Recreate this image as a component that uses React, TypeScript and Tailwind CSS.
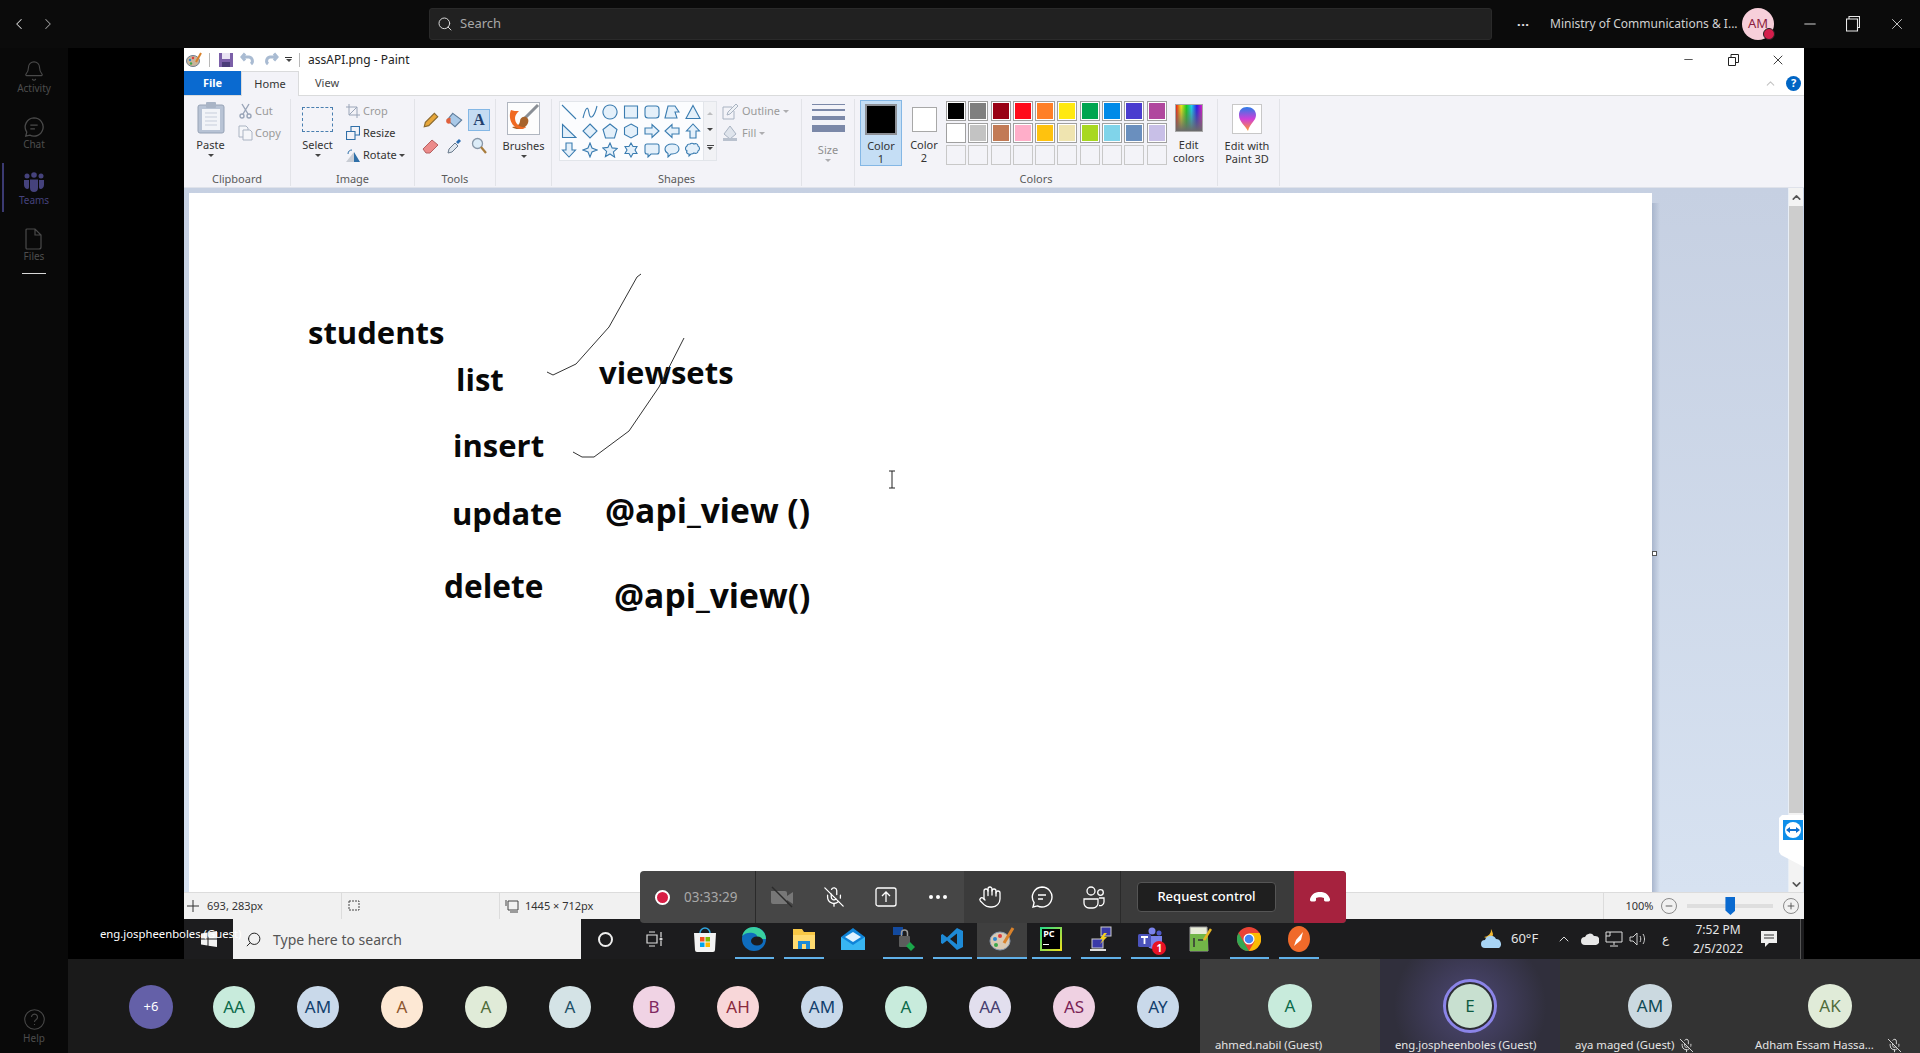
import { Bell, ChevronDown, ChevronLeft, ChevronRight, ChevronUp, Hand, MicOff, Minus, Plus, Search, X } from "lucide-react";

const shapes = [
  "M1 1L15 15",
  "M1 14C4 2 6 2 7 9S12 14 15 2",
  "M8 1a7 7 0 1 0 .01 0z",
  "M1.5 2h13v12h-13z",
  "M4 2h8a3 3 0 0 1 3 3v6a3 3 0 0 1-3 3H4a3 3 0 0 1-3-3V5a3 3 0 0 1 3-3z",
  "M1 14L4 2h7l4 6h-4l2 6z",
  "M8 1.5L15 14.5H1z",
  "M1.5 1.5L15 14.5H1.5z",
  "M8 1L15 8L8 15L1 8z",
  "M8 1L15 6.5L12.5 15H3.5L1 6.5z",
  "M8 1L14.5 4.5v7L8 15L1.5 11.5v-7z",
  "M1 5h7V1.5L15 8l-7 6.5V11H1z",
  "M15 5H8V1.5L1 8l7 6.5V11h7z",
  "M5 15V8H1.5L8 1l6.5 7H11v7z",
  "M5 1v7H1.5L8 15l6.5-7H11V1z",
  "M8 1L10 6L15 8L10 10L8 15L6 10L1 8L6 6z",
  "M8 1l2.1 4.9 5.3.5-4 3.5 1.2 5.2L8 12l-4.6 2.6 1.2-5.2-4-3.5 5.3-.5z",
  "M8 1l2 3.5h4L12 8l2 3.5h-4L8 15l-2-3.5H2L4 8 2 4.5h4z",
  "M3 2h10a2 2 0 0 1 2 2v6a2 2 0 0 1-2 2H7l-3 3v-3H3a2 2 0 0 1-2-2V4a2 2 0 0 1 2-2z",
  "M8 2c4 0 7 2 7 5s-3 5-7 5H7l-3 3v-3.5C2 10.5 1 9 1 7c0-3 3-5 7-5z",
  "M5 2c1-1 3-1 4 0 2-1 4 0 4 2 2 1 2 4 0 5 0 2-2 3-4 2-1 1-2 1-3 1l-2 2v-2c-2 0-3-2-2-3-2-1-2-4 0-5 0-1 1-2 3-2z",
];

const paletteTop = ["#000000", "#7f7f7f", "#990014", "#ff0a1a", "#ff7f27", "#ffe910", "#00a550", "#008ae8", "#4a3ccf", "#b0479e"];
const paletteMid = ["#ffffff", "#c3c3c3", "#c27a55", "#ffaec9", "#ffc20e", "#efe4b0", "#a8d820", "#80d4ea", "#6a8fbe", "#c8bfe7"];

const people = [
  { label: "AA", bg: "bg-[#c8ebdc]", fg: "text-[#0b6a4a]" },
  { label: "AM", bg: "bg-[#c9d9ea]", fg: "text-[#123f6d]" },
  { label: "A", bg: "bg-[#fde8d4]", fg: "text-[#8e562e]" },
  { label: "A", bg: "bg-[#e0ebd8]", fg: "text-[#4f6b3a]" },
  { label: "A", bg: "bg-[#d4e3e6]", fg: "text-[#1e4f66]" },
  { label: "B", bg: "bg-[#f0d3e4]", fg: "text-[#80275f]" },
  { label: "AH", bg: "bg-[#f8d7d9]", fg: "text-[#8a2a3c]" },
  { label: "AM", bg: "bg-[#c9d9ea]", fg: "text-[#123f6d]" },
  { label: "A", bg: "bg-[#c8ebdc]", fg: "text-[#0b6a4a]" },
  { label: "AA", bg: "bg-[#e2dfee]", fg: "text-[#463e70]" },
  { label: "AS", bg: "bg-[#efd1e2]", fg: "text-[#7a1f55]" },
  { label: "AY", bg: "bg-[#c9d9ea]", fg: "text-[#123f6d]" },
];

function Caret({ className = "" }: { className?: string }) {
  return <span className={`block w-0 h-0 border-x-[3px] border-x-transparent border-t-[3px] border-t-[#444] ${className}`} />;
}

function RailItem({ label, active, icon }: { label: string; active?: boolean; icon: React.ReactNode }) {
  return (
    <div className="relative h-[56px] w-full flex flex-col items-center justify-center">
      {active && <div className="absolute left-[2px] top-[2px] bottom-[5px] w-[2px] bg-[#3b3a72]" />}
      {icon}
      <span className={`text-[10px] leading-[13px] ${active ? "text-[#45427c]" : "text-[#4d4d4d]"}`}>{label}</span>
    </div>
  );
}

function ChatIcon({ color, size = 22 }: { color: string; size?: number }) {
  return (
    <svg width={size} height={size} viewBox="0 0 24 24" fill="none" stroke={color} strokeWidth="1.4">
      <path d="M12 2a10 10 0 1 1-4.6 18.9L3 22l1.1-4.4A10 10 0 0 1 12 2z" />
      <path d="M8 10h8M8 14h5" />
    </svg>
  );
}

function RibbonGroup({ label, width, children }: { label: string; width: string; children: React.ReactNode }) {
  return (
    <div className={`${width} h-full border-r border-[#e2e3e8] flex flex-col shrink-0`}>
      <div className="flex-1 flex min-h-0">{children}</div>
      <div className="h-[15px] text-center text-[11px] leading-[15px] text-[#5a5a5a]">{label}</div>
    </div>
  );
}

function Label({ children, dim }: { children: React.ReactNode; dim?: boolean }) {
  return <span className={`block text-center text-[11px] leading-[13px] ${dim ? "text-[#8f8f8f]" : "text-[#333]"}`}>{children}</span>;
}

function SmallRow({ icon, text, dim }: { icon: React.ReactNode; text: string; dim?: boolean }) {
  return (
    <div className="h-[22px] flex items-center gap-[1px]">
      <span className="w-[18px] flex justify-center">{icon}</span>
      <span className={`text-[11px] ${dim ? "text-[#9a9a9a]" : "text-[#333]"}`}>{text}</span>
    </div>
  );
}

function Canvas() {
  return (
    <div className="relative w-[1463px] h-full bg-white shrink-0 overflow-hidden font-['Open_Sans',sans-serif] font-bold text-[#080808] text-[31px] leading-[40px]">
      <span className="absolute left-[119px] top-[119px]">students</span>
      <span className="absolute left-[267px] top-[166px]">list</span>
      <span className="absolute left-[410px] top-[159px]">viewsets</span>
      <span className="absolute left-[264px] top-[232px]">insert</span>
      <span className="absolute left-[263px] top-[300px]">update</span>
      <span className="absolute left-[416px] top-[297px] text-[33.6px]">@api_view ()</span>
      <span className="absolute left-[255px] top-[373px] text-[31.6px]">delete</span>
      <span className="absolute left-[425px] top-[382px] text-[33.6px]">@api_view()</span>
      <svg className="absolute left-0 top-0" width="1463" height="700" fill="none" stroke="#333" strokeWidth="1">
        <path d="M452 81L448 84L420 134L387 171L364 182L358 179" />
        <path d="M495 145L470 194L440 238L405 264L393 264L384 259" />
        <path d="M700 278h6M700 295h6M703 278v17" stroke="#222" />
      </svg>
    </div>
  );
}

function ToolbarCell({ children }: { children: React.ReactNode }) {
  return <div className="w-[52px] h-full flex items-center justify-center shrink-0">{children}</div>;
}

function TaskSlot({ on, active, children }: { on?: boolean; active?: boolean; children: React.ReactNode }) {
  return (
    <div className={`relative w-[49.5px] h-full flex items-center justify-center shrink-0 ${active ? "bg-[#3f3f3f]" : ""}`}>
      {children}
      {on && <div className={`absolute bottom-0 h-[2px] bg-[#60b0e8] ${active ? "inset-x-0" : "inset-x-[5px]"}`} />}
    </div>
  );
}

function Tile({ name, mic, wide, bg, avatar }: { name: string; mic?: boolean; wide?: string; bg: string; avatar: React.ReactNode }) {
  return (
    <div className={`w-[180px] h-full flex flex-col items-center shrink-0 ${bg}`}>
      <div className="h-[50px] mt-[22px] flex items-center">{avatar}</div>
      <div className={`self-start pl-[15px] mt-[6px] flex items-center text-[11.3px] leading-[16px] text-[#e4e4e4] ${wide ?? "gap-[5px]"}`}>
        <span className="whitespace-nowrap">{name}</span>
        {mic && <MicOff size={15} strokeWidth={1.5} className="text-[#ddd]" />}
      </div>
    </div>
  );
}

export default function App() {
  return (
    <div className="relative w-[1920px] h-[1053px] flex flex-col overflow-hidden bg-black font-['Noto_Sans',sans-serif]">
      {/* top bar */}
      <div className="h-[48px] shrink-0 bg-[#0b0b0b] flex items-center">
        <div className="w-[429px] pl-[10px] flex items-center gap-[11px] text-[#d6d6d6]">
          <ChevronLeft size={18} strokeWidth={1.4} />
          <ChevronRight size={18} strokeWidth={1.4} className="text-[#9a9a9a]" />
        </div>
        <div className="w-[1063px] h-[32px] bg-[#212121] rounded-[3px] border border-[#2a2a2a] flex items-center pl-[7px] gap-[7px] text-[#a8a8a8]">
          <Search size={16} strokeWidth={1.5} className="text-[#d8d8d8]" />
          <span className="text-[13px]">Search</span>
        </div>
        <div className="flex-1 flex items-center">
          <span className="ml-[25px] w-[14px] text-[#e5e5e5] text-[13px] font-bold leading-none tracking-[0.5px]">···</span>
          <span className="ml-[19px] w-[178px] text-[12px] text-[#d0d0d0] whitespace-nowrap">Ministry of Communications &amp; I...</span>
          <div className="relative ml-[14px] w-[32px] h-[32px] rounded-full bg-[#f7cfda] text-[#8c1d40] text-[13px] flex items-center justify-center">
            AM
            <span className="absolute right-[-1px] bottom-0 w-[12px] h-[12px] rounded-full bg-[#d41e4b] border border-[#222]" />
          </div>
          <Minus size={18} strokeWidth={1.2} className="ml-[27px] text-[#e8e8e8]" />
          <svg className="ml-[27px]" width="14" height="16" viewBox="0 0 14 16" fill="none" stroke="#e8e8e8" strokeWidth="1.1">
            <path d="M.5 3h11v12H.5zM3 3V.5h10.500v11H11.500" />
          </svg>
          <X size={18} strokeWidth={1.1} className="ml-[28px] text-[#e8e8e8]" />
        </div>
      </div>

      <div className="flex-1 flex min-h-0">
        {/* left rail */}
        <div className="w-[68px] shrink-0 bg-[#090909] flex flex-col items-center pt-[1px]">
          <RailItem label="Activity" icon={<Bell size={22} strokeWidth={1.2} className="text-[#4a4a4a]" />} />
          <RailItem label="Chat" icon={<ChatIcon color="#4a4a4a" />} />
          <RailItem
            label="Teams"
            active
            icon={
              <svg width="22" height="22" viewBox="0 0 22 22" fill="#45427c">
                <circle cx="4" cy="4" r="2.500" />
                <circle cx="11" cy="3" r="2.800" />
                <circle cx="18" cy="4" r="2.500" />
                <path d="M1 8h5v7c0 1-.5 2-1.500 2C2.500 17 1 15 1 13zM16 8h5v5c0 2-1.500 4-3.500 4-1 0-1.500-1-1.500-2zM7 7.500h8V16c0 2.500-1.500 4-4 4s-4-1.500-4-4z" />
              </svg>
            }
          />
          <RailItem
            label="Files"
            icon={
              <svg width="20" height="22" viewBox="0 0 20 22" fill="none" stroke="#4a4a4a" strokeWidth="1.2">
                <path d="M3 1h8l6 6v12a2 2 0 0 1-2 2H3a1 1 0 0 1-1-1V2a1 1 0 0 1 1-1zM11 1v6h6" />
              </svg>
            }
          />
          <div className="w-[24px] h-px bg-[#d8d8d8]" />
          <div className="mt-auto mb-[8px] flex flex-col items-center gap-[2px]">
            <svg width="21" height="21" viewBox="0 0 21 21" fill="none" stroke="#484848" strokeWidth="1.1">
              <circle cx="10.500" cy="10.500" r="9.800" />
              <path d="M7.500 8a3 3 0 1 1 4.500 2.700c-1 .6-1.500 1.200-1.500 2.300M10.500 15v1" />
            </svg>
            <span className="text-[10px] leading-[13px] text-[#4d4d4d]">Help</span>
          </div>
        </div>

        <div className="flex-1 min-w-0 flex flex-col">
          {/* stage */}
          <div className="h-[911px] shrink-0 pl-[116px]">
            <div className="w-[1620px] h-full flex flex-col bg-white">
              {/* title row */}
              <div className="h-[23px] shrink-0 flex items-center text-[#222]">
                <svg className="ml-[2px]" width="16" height="16" viewBox="0 0 16 16">
                  <ellipse cx="7" cy="9" rx="6.500" ry="5.500" fill="#c9b49a" stroke="#6f7f93" />
                  <circle cx="4" cy="8" r="1.200" fill="#2f87d0" />
                  <circle cx="7" cy="6" r="1.200" fill="#e03d3d" />
                  <circle cx="5" cy="11.500" r="1.200" fill="#3ca84a" />
                  <path d="M10 10L15 1" stroke="#d9822b" strokeWidth="2" />
                </svg>
                <div className="ml-[7px] w-px h-[14px] bg-[#b8b8b8]" />
                <svg className="ml-[8px]" width="16" height="16" viewBox="0 0 16 16">
                  <path d="M1 1h14v14H1z" fill="#7b5fa8" />
                  <path d="M4 1h8v6H4z" fill="#e9e4f3" />
                  <path d="M4 10h8v5H4z" fill="#4a3c78" />
                </svg>
                <svg className="ml-[6px]" width="16" height="16" viewBox="0 0 16 16" fill="none" stroke="#a9bbd2" strokeWidth="3">
                  <path d="M3 5h6a4 4 0 0 1 2 7M5 1.500L2 5l3 3.500" />
                </svg>
                <svg className="ml-[7px]" width="16" height="16" viewBox="0 0 16 16" fill="none" stroke="#a9bbd2" strokeWidth="3">
                  <path d="M13 5H7a4 4 0 0 0-2 7M11 1.500L14 5l-3 3.500" />
                </svg>
                <div className="ml-[6px] flex flex-col items-center gap-[1px]">
                  <div className="w-[7px] h-px bg-[#333]" />
                  <Caret />
                </div>
                <div className="ml-[7px] w-px h-[14px] bg-[#b8b8b8]" />
                <span className="ml-[8px] text-[12px] leading-[16px]">assAPI.png - Paint</span>
                <Minus size={13} strokeWidth={1.4} className="ml-auto text-[#222]" />
                <svg className="ml-[33px]" width="11" height="12" viewBox="0 0 11 12" fill="none" stroke="#222">
                  <path d="M.5 3.500h7v8h-7zM3 3.500V.5h7.500v8H8" />
                </svg>
                <X size={16} strokeWidth={1.3} className="ml-[31px] mr-[18px] text-[#222]" />
              </div>

              {/* tabs */}
              <div className="h-[25px] shrink-0 flex items-stretch border-b border-[#dadbdc] text-[11px]">
                <div className="w-[57px] bg-[#0a6ad0] text-white font-bold flex items-center justify-center">File</div>
                <div className="w-[58px] h-[25px] bg-[#f3f3f8] border-x border-t border-[#dadbdc] text-[#333] flex items-center justify-center">Home</div>
                <div className="w-[56px] text-[#444] flex items-center justify-center">View</div>
                <ChevronUp size={13} strokeWidth={2} className="ml-auto self-center text-[#c4c4c4]" />
                <div className="ml-[9px] mr-[3px] self-center w-[15px] h-[15px] rounded-full bg-[#0065c4] text-white text-[11px] font-bold flex items-center justify-center">?</div>
              </div>

              {/* ribbon */}
              <div className="h-[92px] shrink-0 bg-[#f3f3f8] flex pt-[3px] pb-px border-b border-[#dfe2ea]">
                <RibbonGroup label="Clipboard" width="w-[107px]">
                  <div className="w-[52px] pl-[1px] flex flex-col items-center">
                    <svg className="mt-[3px]" width="28" height="32" viewBox="0 0 28 32">
                      <rect x="1" y="3" width="26" height="28" rx="2" fill="#b8c3d5" stroke="#97a3b6" />
                      <rect x="5" y="7" width="18" height="21" fill="#f2f4f8" />
                      <path d="M8 11h12M8 15h12M8 19h12M8 23h12" stroke="#c7cedb" />
                      <rect x="9" y="0" width="10" height="6" rx="1" fill="#a9b4c6" />
                    </svg>
                    <div className="mt-[4px]"><Label>Paste</Label></div>
                    <Caret className="mt-[3px]" />
                  </div>
                  <div className="pt-[1px]">
                    <SmallRow dim text="Cut" icon={<svg width="13" height="16" viewBox="0 0 13 16" fill="none" stroke="#9aa5b8" strokeWidth="1.4"><path d="M3 1l6 10M10 1L4 11" /><circle cx="3" cy="13" r="2" /><circle cx="10" cy="13" r="2" /></svg>} />
                    <SmallRow dim text="Copy" icon={<svg width="15" height="16" viewBox="0 0 15 16" fill="#f5f6f9" stroke="#aab3c2"><path d="M1 1h7l2 2v9H1z" /><path d="M5 5h7l2 2v8H5z" /></svg>} />
                  </div>
                </RibbonGroup>
                <RibbonGroup label="Image" width="w-[124px]">
                  <div className="w-[53px] flex flex-col items-center">
                    <div className="mt-[8px] w-[31px] h-[25px] border border-dashed border-[#4a7fb0]" />
                    <div className="mt-[6px]"><Label>Select</Label></div>
                    <Caret className="mt-[3px]" />
                  </div>
                  <div className="pt-[1px]">
                    <SmallRow dim text="Crop" icon={<svg width="14" height="14" viewBox="0 0 14 14" fill="none" stroke="#9aa5b8"><path d="M3 0v11h11M0 3h11v11M11 3L3 11" /></svg>} />
                    <SmallRow text="Resize" icon={<svg width="14" height="14" viewBox="0 0 14 14" fill="none" stroke="#2f6fa8" strokeWidth="1.1"><path d="M5 5V.5h8.500v8.500H9M.5 5.500H9v8H.5z" /></svg>} />
                    <SmallRow text="Rotate" icon={<svg width="15" height="14" viewBox="0 0 15 14"><path d="M0 14L8 4v10z" fill="#c8ccd4" /><path d="M8 4l6 10H8z" fill="#2f6fa8" /><path d="M2 6c0-3 2-4 4-4" fill="none" stroke="#2f6fa8" /></svg>} />
                  </div>
                  <Caret className="mt-[55px] ml-[2px]" />
                </RibbonGroup>
                <RibbonGroup label="Tools" width="w-[81px]">
                  <div className="pl-[4px] pt-[9px] grid grid-cols-[24px_24px_24px] grid-rows-[24px_27px] place-items-center">
                    <svg width="18" height="18" viewBox="0 0 16 16"><path d="M2 14l1-4 8-8 3 3-8 8z" fill="#e8a73a" stroke="#8a6a30" /></svg>
                    <svg width="20" height="20" viewBox="0 0 18 18"><path d="M7 3l8 6-6 6-7-6z" fill="#a9c9e8" stroke="#5f7c9a" /><path d="M1 10c0-2 2-3 4-3v5c-2 1-4 0-4-2z" fill="#e0603c" /></svg>
                    <div className="w-[22px] h-[22px] bg-[#c5dcf2] border border-[#84b7e5] flex items-center justify-center font-['Liberation_Serif',serif] font-bold text-[16px] text-[#21406e]">A</div>
                    <svg width="18" height="16" viewBox="0 0 18 16"><path d="M1 11L10 2l6 5-8 8H4z" fill="#ec8b8b" stroke="#b56060" /></svg>
                    <svg width="16" height="17" viewBox="0 0 16 17"><path d="M1 16l1-4 6-6 3 3-6 6z" fill="#dfe6ee" stroke="#6a7a8c" /><path d="M9 5l3-3 2 2-3 3z" fill="#2b6cb0" /></svg>
                    <svg width="16" height="17" viewBox="0 0 16 17" fill="none"><circle cx="6.500" cy="6.500" r="5" fill="#dcecf8" stroke="#8897a8" strokeWidth="1.300" /><path d="M10 10l5 6" stroke="#a87c3c" strokeWidth="2.200" /></svg>
                  </div>
                </RibbonGroup>
                <RibbonGroup label="" width="w-[56px]">
                  <div className="w-full flex flex-col items-center">
                    <svg className="mt-[3px]" width="33" height="33" viewBox="0 0 33 33">
                      <rect x=".5" y=".5" width="32" height="32" fill="#fdfdfd" stroke="#b0b6c0" />
                      <path d="M31 3L17 17" stroke="#8a8f96" strokeWidth="3" />
                      <path d="M19 15c-3-1-6 1-6 4s-3 6-8 6c5 4 14 2 16-4 1-3 0-5-2-6z" fill="#a8642c" />
                      <path d="M4 8c-3 7 0 18 10 19 4 0 5-2 5-2-6 1-11-3-11-9 0-3 2-5 4-7-3 0-6 0-8-1z" fill="#f06a22" />
                    </svg>
                    <div className="mt-[4px]"><Label>Brushes</Label></div>
                    <Caret className="mt-[3px]" />
                  </div>
                </RibbonGroup>
                <RibbonGroup label="Shapes" width="w-[250px]">
                  <div className="ml-[7px] mt-[2px] w-[158px] h-[60px] flex border border-[#e2e5ea] bg-[#fbfcfe] shrink-0">
                    <div className="w-[144px] -ml-[1px] grid grid-cols-7 grid-rows-3 place-items-center">
                      {shapes.map((d, i) => (
                        <svg key={i} width="16" height="16" viewBox="0 0 16 16" fill="#e4f0fa" stroke="#3a7cb0" strokeWidth="1.100">
                          <path d={d} fill={i < 2 ? "none" : "#e4f0fa"} />
                        </svg>
                      ))}
                    </div>
                    <div className="flex-1 bg-[#f1f2f5] border-l border-[#e2e5ea] flex flex-col items-center justify-around py-[3px]">
                      <Caret className="rotate-180 opacity-30" />
                      <Caret />
                      <div className="flex flex-col items-center gap-[1px]">
                        <div className="w-[7px] h-px bg-[#444]" />
                        <Caret />
                      </div>
                    </div>
                  </div>
                  <div className="ml-[5px] mt-[1px]">
                    <div className="h-[22px] flex items-center gap-[3px] text-[11px] text-[#9a9a9a]">
                      <svg width="17" height="17" viewBox="0 0 17 17" fill="none" stroke="#a9b3c2"><path d="M1 4h9M1 4v12h11V8" /><path d="M5 12l1-3 8-8 2 2-8 8z" fill="#eef1f5" /></svg>
                      Outline
                      <Caret className="opacity-40" />
                    </div>
                    <div className="h-[22px] flex items-center gap-[3px] text-[11px] text-[#9a9a9a]">
                      <svg width="17" height="17" viewBox="0 0 17 17"><path d="M8 1l6 8-6 5-6-5z" fill="#dfe4ec" stroke="#a9b3c2" /><path d="M1 13h14v3H1z" fill="#b9c1ce" /></svg>
                      Fill
                      <Caret className="opacity-40" />
                    </div>
                  </div>
                </RibbonGroup>
                <RibbonGroup label="" width="w-[53px]">
                  <div className="w-full flex flex-col items-center">
                    <div className="mt-[5px] w-[33px] flex flex-col">
                      <div className="h-px bg-[#7b88a8]" />
                      <div className="mt-[4px] h-[2px] bg-[#7b88a8]" />
                      <div className="mt-[5px] h-[4px] bg-[#7b88a8]" />
                      <div className="mt-[5px] h-[7px] bg-[#7b88a8]" />
                    </div>
                    <div className="mt-[11px]"><Label dim>Size</Label></div>
                    <Caret className="mt-[3px] opacity-40" />
                  </div>
                </RibbonGroup>
                <RibbonGroup label="Colors" width="w-[363px]">
                  <div className="ml-[5px] mt-[1px] w-[42px] h-[66px] bg-[#c5def5] border border-[#84b7e5] flex flex-col items-center shrink-0">
                    <div className="mt-[3px] w-[32px] h-[31px] bg-black border-2 border-[#8d9096]" />
                    <div className="mt-[4px]"><Label>Color</Label></div>
                    <Label>1</Label>
                  </div>
                  <div className="w-[44px] flex flex-col items-center shrink-0">
                    <div className="mt-[8px] w-[25px] h-[25px] bg-white border border-[#a8a8a8]" />
                    <div className="mt-[6px]"><Label>Color</Label></div>
                    <Label>2</Label>
                  </div>
                  <div className="mt-[2px] grid grid-cols-[repeat(10,20px)] grid-rows-[repeat(3,20px)] gap-x-[2.300px] gap-y-[2px] shrink-0">
                    {paletteTop.concat(paletteMid).map((c, i) => (
                      <div key={i} className="border border-[#a0a0a0] p-px bg-white">
                        <div className="w-full h-full" style={{ backgroundColor: c }} />
                      </div>
                    ))}
                    {Array.from({ length: 10 }).map((_, i) => (
                      <div key={i} className="border border-[#c8c8c8] bg-[#f3f3f8]" />
                    ))}
                  </div>
                  <div className="ml-[7px] w-[30px] flex flex-col items-center shrink-0">
                    <div className="mt-[5px] w-[28px] h-[28px] border border-[#a8a8a8] bg-[linear-gradient(180deg,transparent,#6b6b6b),linear-gradient(90deg,#f01818,#f0e818,#18d018,#18d0f0,#2818f0,#e018c8)]" />
                    <div className="mt-[6px]"><Label>Edit</Label></div>
                    <Label>colors</Label>
                  </div>
                </RibbonGroup>
                <RibbonGroup label="" width="w-[62px]">
                  <div className="w-full pr-[3px] flex flex-col items-center">
                    <div className="mt-[5px] w-[30px] h-[30px] bg-white border border-[#c8c8c8] flex items-center justify-center">
                      <svg width="20" height="26" viewBox="0 0 20 26">
                        <defs>
                          <linearGradient id="drop" x1="0" y1="0" x2="0" y2="1">
                            <stop offset="0" stopColor="#2a7de8" />
                            <stop offset=".5" stopColor="#d03fd8" />
                            <stop offset="1" stopColor="#ff9a2a" />
                          </linearGradient>
                        </defs>
                        <path d="M10 1c5 0 9 3 9 8 0 6-6 8-8 16-3-6-9-9-9-16 0-5 3-8 8-8z" fill="url(#drop)" />
                      </svg>
                    </div>
                    <div className="mt-[5px]"><Label>Edit with</Label></div>
                    <Label>Paint 3D</Label>
                  </div>
                </RibbonGroup>
              </div>

              {/* drawing area */}
              <div className="relative h-[704px] shrink-0 flex bg-[linear-gradient(180deg,#c6d0e2,#d7e2f1)]">
                <div className="flex-1 min-w-0 pl-[5px] pt-[5px] flex">
                  <Canvas />
                  <div className="w-[8px] mt-[10px] bg-[linear-gradient(90deg,#a9b6cd,transparent)]" />
                </div>
                <div className="absolute left-[1468px] top-[363px] w-[5px] h-[5px] bg-white border border-[#555]" />
                <div className="w-[15px] mr-px shrink-0 flex flex-col border-l border-[#e8eef5] bg-[#f3f3f3]">
                  <div className="h-[18px] flex items-center justify-center"><ChevronUp size={13} strokeWidth={3} className="text-[#555]" /></div>
                  <div className="h-[607px] bg-[#cdcdcd]" />
                  <div className="mt-auto h-[16px] flex items-center justify-center"><ChevronDown size={13} strokeWidth={3} className="text-[#555]" /></div>
                </div>
                <div className="absolute right-0 top-[627px] w-[25px] h-[52px]">
                  <svg className="absolute inset-0" width="25" height="52" viewBox="0 0 25 52">
                    <path d="M3 0h22v52L2 40 0 37V3z" fill="#fff" />
                  </svg>
                  <div className="absolute left-[4px] top-[5px] w-[20px] h-[20px] bg-[#0e8ee9] flex items-center justify-center">
                    <svg width="18" height="18" viewBox="0 0 18 18">
                      <circle cx="9" cy="9" r="8" fill="#fff" />
                      <path d="M2 9l4-3v2h6V6l4 3-4 3v-2H6v2z" fill="#0e6fd0" />
                    </svg>
                  </div>
                </div>
              </div>

              {/* status bar */}
              <div className="h-[27px] shrink-0 bg-[#f1f1f1] border-t border-[#dcdcdc] flex items-center text-[11px] text-[#333]">
                <div className="w-[158px] h-full pl-[3px] flex items-center gap-[8px] border-r border-[#dcdcdc]">
                  <svg width="12" height="12" viewBox="0 0 12 12" stroke="#333" fill="none"><path d="M6 0v12M0 6h12" /></svg>
                  693, 283px
                </div>
                <div className="w-[158px] h-full pl-[4px] flex items-center border-r border-[#dcdcdc]">
                  <svg width="14" height="14" viewBox="0 0 14 14" stroke="#444" fill="none" strokeDasharray="2 1"><path d="M3 2h10v9H3z" /></svg>
                </div>
                <div className="h-full pl-[5px] flex items-center gap-[6px]">
                  <svg width="14" height="14" viewBox="0 0 14 14" stroke="#444" fill="none"><path d="M3 2h10v9H3zM1 1v6M5 13h8" /></svg>
                  1445 × 712px
                </div>
                <div className="ml-[1010px] pl-[21px] h-full flex items-center border-l border-[#dcdcdc]">
                  <span className="w-[32px]">100%</span>
                  <span className="ml-[4px] w-[16px] h-[16px] rounded-full border border-[#8a8a8a] flex items-center justify-center"><Minus size={10} strokeWidth={2} className="text-[#444]" /></span>
                  <div className="relative ml-[10px] w-[86px] h-[4px] bg-[#dedede]">
                    <div className="absolute left-[38px] top-[-7px] w-[10px] h-[18px] bg-[#0a6ad0] [clip-path:polygon(0_0,100%_0,100%_75%,50%_100%,0_75%)]" />
                  </div>
                  <span className="ml-[10px] w-[16px] h-[16px] rounded-full border border-[#8a8a8a] flex items-center justify-center"><Plus size={10} strokeWidth={2} className="text-[#444]" /></span>
                </div>
              </div>

              {/* windows taskbar */}
              <div className="h-[40px] shrink-0 bg-[#1c1c1e] flex items-center">
                <div className="w-[49px] flex justify-center">
                  <svg width="16" height="16" viewBox="0 0 16 16" fill="#f2f2f2"><path d="M0 2.500L6.500 1.500V7.500H0zM7.500 1.300L16 0V7.500H7.500zM0 8.500H6.500V14.500L0 13.500zM7.500 8.500H16V16L7.500 14.700z" /></svg>
                </div>
                <div className="w-[348px] h-full bg-[#f1f1f1] flex items-center pl-[12px] gap-[11px] text-[14px] text-[#555]">
                  <Search size={17} strokeWidth={1.4} className="text-[#222] -scale-x-100" />
                  Type here to search
                </div>
                <div className="w-[48px] flex justify-center">
                  <div className="w-[15px] h-[15px] rounded-full border-[2.500px] border-[#eeeeee]" />
                </div>
                <div className="w-[51px] flex justify-center">
                  <svg width="18" height="16" viewBox="0 0 18 16" fill="none" stroke="#ddd" strokeWidth="1.200"><path d="M1 4h10v8H1zM3 1h6M3 15h6M15 1v5M15 10v5" /><circle cx="15" cy="8" r="1" fill="#ddd" /></svg>
                </div>
                <TaskSlot>
                  <svg width="24" height="26" viewBox="0 0 24 26"><path d="M1 7h22l-1 17a2 2 0 0 1-2 2H4a2 2 0 0 1-2-2z" fill="#f3f3f3" /><path d="M7 7a5 5 0 0 1 10 0" fill="none" stroke="#2fa6e0" strokeWidth="1.500" /><path d="M7 11h4.500v4.500H7z" fill="#f25022" /><path d="M12.500 11H17v4.500h-4.500z" fill="#7fba00" /><path d="M7 16.500h4.500V21H7z" fill="#00a4ef" /><path d="M12.500 16.500H17V21h-4.500z" fill="#ffb900" /></svg>
                </TaskSlot>
                <TaskSlot on>
                  <svg width="24" height="24" viewBox="0 0 24 24"><circle cx="12" cy="12" r="12" fill="#0f6cbd" /><path d="M24 12C24 5 18 0 12 0 6 0 2 3 0 9c3-3 7-4 11-3 4 1 5 4 4 6h9z" fill="#39d0a0" /><ellipse cx="15" cy="14" rx="6" ry="4.500" fill="#1c1c1e" /></svg>
                </TaskSlot>
                <TaskSlot on>
                  <svg width="24" height="22" viewBox="0 0 24 22"><path d="M1 1h9l2 3h11v17H1z" fill="#f8c846" /><path d="M1 7h22v14H1z" fill="#ffdb70" /><path d="M6 13h12v8H6z" fill="#1b8ad6" /><path d="M10 16h4v5h-4z" fill="#ffdb70" /></svg>
                </TaskSlot>
                <TaskSlot>
                  <svg width="24" height="24" viewBox="0 0 24 24"><path d="M12 1L24 10v13H0V10z" fill="#0f84d8" /><path d="M0 10l12 8 12-8v13H0z" fill="#38b6f2" /><path d="M4 10l8-5 8 5-8 5z" fill="#ddf2ff" /></svg>
                </TaskSlot>
                <TaskSlot on>
                  <svg width="24" height="26" viewBox="0 0 24 26"><rect x="2" y="1" width="10" height="8" fill="#134a9e" /><rect x="8" y="10" width="11" height="11" rx="1" fill="#5c5c5c" /><path d="M10.500 10V7a3 3 0 0 1 6 0v3" fill="none" stroke="#9a9a9a" strokeWidth="1.500" /><path d="M15 20l4-4 5 5-4 4z" fill="#1aa64a" /></svg>
                </TaskSlot>
                <TaskSlot on>
                  <svg width="24" height="24" viewBox="0 0 24 24"><path d="M17 1l6 3v16l-6 3L7 13.500 2.500 17 1 16V8l1.500-1L7 10.500z" fill="#1e8ad6" /><path d="M17 6.500L10 12l7 5.500z" fill="#1c1c1e" /></svg>
                </TaskSlot>
                <TaskSlot on active>
                  <svg width="26" height="26" viewBox="0 0 26 26"><ellipse cx="11" cy="15" rx="10" ry="9" fill="#d8c9b4" stroke="#8a9bb0" /><circle cx="6" cy="13" r="2" fill="#2f87d0" /><circle cx="11" cy="10" r="2" fill="#e03d3d" /><circle cx="7" cy="19" r="2" fill="#3ca84a" /><path d="M15 17L24 2" stroke="#d9822b" strokeWidth="3" /></svg>
                </TaskSlot>
                <TaskSlot on>
                  <div className="w-[22px] h-[24px] bg-[linear-gradient(135deg,#22d88a,#f5e11a)] p-[2px]">
                    <div className="w-full h-full bg-black text-white text-[9px] leading-[10px] font-bold pl-[1px]">
                      PC
                      <div className="mt-[5px] w-[6px] h-px bg-white" />
                    </div>
                  </div>
                </TaskSlot>
                <TaskSlot on>
                  <svg width="24" height="26" viewBox="0 0 24 26"><rect x="12" y="1" width="10" height="9" fill="#3a3aa8" stroke="#ccc" /><rect x="3" y="13" width="11" height="9" fill="#3a3aa8" stroke="#ccc" /><path d="M1 24h16" stroke="#ddd" strokeWidth="2" /><path d="M15 7l-4 6h3l-3 5 7-7h-3l3-4z" fill="#f5d020" /></svg>
                </TaskSlot>
                <TaskSlot on>
                  <div className="relative">
                    <svg width="26" height="26" viewBox="0 0 26 26"><circle cx="15" cy="5" r="3.500" fill="#7b83eb" /><circle cx="22" cy="7" r="2.500" fill="#5059c9" /><path d="M10 10h15v8a5 5 0 0 1-5 5h-4a6 6 0 0 1-6-6z" fill="#7b83eb" /><rect x="1" y="8" width="13" height="13" rx="1.500" fill="#4b53bc" /><path d="M4 11h7M7.500 11v7" stroke="#fff" strokeWidth="1.800" /></svg>
                    <span className="absolute right-[-3px] bottom-[-3px] w-[14px] h-[14px] rounded-full bg-[#e81224] text-white text-[10px] font-bold leading-[14px] text-center">1</span>
                  </div>
                </TaskSlot>
                <TaskSlot>
                  <svg width="24" height="26" viewBox="0 0 24 26"><path d="M2 1h17l1 24H2z" fill="#e8ecd8" stroke="#999" /><path d="M2 8h18v17H2z" fill="#72b648" /><path d="M6 12v9M10 14h5" stroke="#333" strokeWidth="1.500" /><path d="M16 14L23 3" stroke="#e6b422" strokeWidth="2.500" /></svg>
                </TaskSlot>
                <TaskSlot on>
                  <svg width="24" height="24" viewBox="0 0 24 24"><circle cx="12" cy="12" r="12" fill="#ea4335" /><path d="M12 24A12 12 0 0 1 1.600 6L7 15.500 12 24z" fill="#34a853" /><path d="M12 24l5.500-9.500L12 6h10.500A12 12 0 0 1 12 24z" fill="#fbbc05" /><circle cx="12" cy="12" r="5.500" fill="#fff" /><circle cx="12" cy="12" r="4.300" fill="#4285f4" /></svg>
                </TaskSlot>
                <TaskSlot on>
                  <svg width="22" height="26" viewBox="0 0 22 26"><ellipse cx="11" cy="13" rx="11" ry="13" fill="#f06a2a" /><path d="M6 20l2-6 7-8-2 8z" fill="#fff" /></svg>
                </TaskSlot>

                {/* system tray */}
                <div className="ml-auto h-full flex items-center text-[#e6e6e6]">
                  <svg width="24" height="22" viewBox="0 0 24 22"><path d="M11 1a7 7 0 0 1-7 8c3 2 8 1 9-2 0-2-1-4-2-6z" fill="#f5b82e" /><path d="M5 20a4 4 0 0 1 0-8 6 6 0 0 1 11-1 5 5 0 0 1 3 9z" fill="#a8d4f5" /></svg>
                  <span className="ml-[7px] w-[30px] text-[13px]">60°F</span>
                  <ChevronUp size={16} strokeWidth={1.4} className="ml-[15px]" />
                  <svg className="ml-[9px]" width="18" height="12" viewBox="0 0 18 12" fill="#e8e8e8"><path d="M4 12a4 4 0 0 1 0-8 5 5 0 0 1 9-1 4 4 0 0 1 2 9z" /></svg>
                  <svg className="ml-[6px]" width="18" height="16" viewBox="0 0 18 16" fill="none" stroke="#ddd"><path d="M5 1h12v10H1V5M1 1h4v4H1zM9 11v3M5 15h8" /></svg>
                  <svg className="ml-[6px]" width="18" height="16" viewBox="0 0 18 16" fill="none" stroke="#cfcfcf"><path d="M1 6h3l4-4v12l-4-4H1zM11 5c1 2 1 4 0 6M14 3c2 3 2 7 0 10" /></svg>
                  <span className="ml-[12px] w-[12px] text-[12px] text-center">ع</span>
                  <div className="ml-[16px] w-[62px] text-center text-[12px] leading-[19px]">
                    <div>7:52 PM</div>
                    <div>2/5/2022</div>
                  </div>
                  <svg className="ml-[11px]" width="18" height="18" viewBox="0 0 18 18"><path d="M1 1h16v12H9l-4 4v-4H1z" fill="#efefef" /><path d="M4 5h10M4 8h10" stroke="#333" /></svg>
                  <div className="ml-[22px] w-px h-full bg-[#555]" />
                  <div className="w-[3px]" />
                </div>
              </div>
            </div>
          </div>

          {/* participant strip */}
          <div className="flex-1 min-h-0 bg-[#1a1a1a] flex items-stretch">
            <div className="w-[1132px] shrink-0 pl-[61px] pt-[1px] flex items-center">
              <div className="w-[44px] h-[44px] mr-[40px] rounded-full bg-[#6460a8] text-white text-[13px] flex items-center justify-center shrink-0">+6</div>
              <div className="flex gap-[42px]">
                {people.map((p, i) => (
                  <div key={i} className={`w-[42px] h-[42px] rounded-full flex items-center justify-center text-[17px] ${p.bg} ${p.fg}`}>{p.label}</div>
                ))}
              </div>
            </div>
            <Tile
              name="ahmed.nabil (Guest)"
              bg="bg-[#3d3d3d]"
              avatar={<div className="w-[44px] h-[44px] rounded-full bg-[#c8ebdc] text-[#0b6a4a] text-[17px] flex items-center justify-center">A</div>}
            />
            <Tile
              name="eng.jospheenboles (Guest)"
              bg="bg-[radial-gradient(circle_at_50%_50%,#4d4875,#302f3c_75%)]"
              avatar={
                <div className="w-[54px] h-[54px] rounded-full border-[3px] border-[#8b84e8] p-[2px] bg-[#2d2d35]">
                  <div className="w-full h-full rounded-full bg-[#c8e0d0] text-[#0e5a40] text-[17px] flex items-center justify-center">E</div>
                </div>
              }
            />
            <Tile
              name="aya maged (Guest)"
              mic
              bg="bg-[#333333]"
              avatar={<div className="w-[44px] h-[44px] rounded-full bg-[#cbd9e0] text-[#0f4a55] text-[17px] flex items-center justify-center">AM</div>}
            />
            <Tile
              name="Adham Essam Hassa..."
              mic
              wide="gap-[13px]"
              bg="bg-[#333333]"
              avatar={<div className="w-[44px] h-[44px] rounded-full bg-[#e0ebd8] text-[#4f6b3a] text-[17px] flex items-center justify-center">AK</div>}
            />
          </div>
        </div>
      </div>

      {/* name label over the shared screen */}
      <span className="absolute left-[100px] top-[926px] text-[11.3px] leading-[16px] text-white whitespace-nowrap">eng.jospheenboles (Guest)</span>

      {/* meeting controls */}
      <div className="absolute left-[640px] top-[871px] w-[706px] h-[52px] rounded-[4px] overflow-hidden flex bg-[#464646] text-white">
        <div className="w-[116px] h-full flex items-center pl-[15px] gap-[14px] border-r border-[#2a2a2a] shrink-0">
          <div className="w-[15px] h-[15px] rounded-full bg-[#d81e45] border-2 border-white shrink-0" />
          <span className="text-[13.5px] text-[#a8a8a8]">03:33:29</span>
        </div>
        <ToolbarCell>
          <svg width="24" height="22" viewBox="0 0 24 22"><path d="M1 5h14a2 2 0 0 1 2 2v11H3a2 2 0 0 1-2-2zM17 10l6-4v12l-6-4z" fill="#777" /><path d="M2 1l20 20" stroke="#2b2b2b" strokeWidth="1.400" /></svg>
        </ToolbarCell>
        <ToolbarCell><MicOff size={22} strokeWidth={1.4} /></ToolbarCell>
        <ToolbarCell>
          <svg width="22" height="22" viewBox="0 0 22 22" fill="none" stroke="#fff" strokeWidth="1.300"><rect x="1" y="2" width="20" height="18" rx="2" /><path d="M11 16V6.500M7 10l4-4 4 4" /></svg>
        </ToolbarCell>
        <ToolbarCell>
          <div className="flex gap-[3px]">
            <span className="w-[4px] h-[4px] rounded-full bg-white" />
            <span className="w-[4px] h-[4px] rounded-full bg-white" />
            <span className="w-[4px] h-[4px] rounded-full bg-white" />
          </div>
        </ToolbarCell>
        <div className="flex h-full bg-[#3b3b3b] border-r border-[#2a2a2a] shrink-0">
          <ToolbarCell><Hand size={24} strokeWidth={1.3} /></ToolbarCell>
          <ToolbarCell><ChatIcon color="#ffffff" size={24} /></ToolbarCell>
          <ToolbarCell>
            <svg width="24" height="24" viewBox="0 0 24 24" fill="none" stroke="#fff" strokeWidth="1.300">
              <circle cx="9" cy="6" r="4" />
              <circle cx="18.500" cy="7.500" r="2.800" />
              <path d="M2 14h14v4a5 5 0 0 1-5 5H7a5 5 0 0 1-5-5zM17 13h5v4a4 4 0 0 1-5 3.500" />
            </svg>
          </ToolbarCell>
        </div>
        <div className="flex-1 h-full bg-[#3b3b3b] flex items-center pl-[16px]">
          <div className="w-[139px] h-[30px] rounded-[4px] bg-[#1f1f1f] border border-[#555] flex items-center justify-center text-[13px] font-medium">Request control</div>
        </div>
        <div className="w-[52px] h-full bg-[#a6223e] flex items-center justify-center shrink-0">
          <svg width="22" height="12" viewBox="0 0 22 12" fill="#fff"><path d="M1 8C3 2 7 1 11 1s8 1 10 7c.3 1.500-.5 2.500-1.500 2.500h-3c-1 0-1.500-.8-1.500-1.500V7c-2-1-6-1-8 0v2c0 .7-.5 1.500-1.500 1.500h-3C1.500 10.500.7 9.500 1 8z" /></svg>
        </div>
      </div>
    </div>
  );
}
